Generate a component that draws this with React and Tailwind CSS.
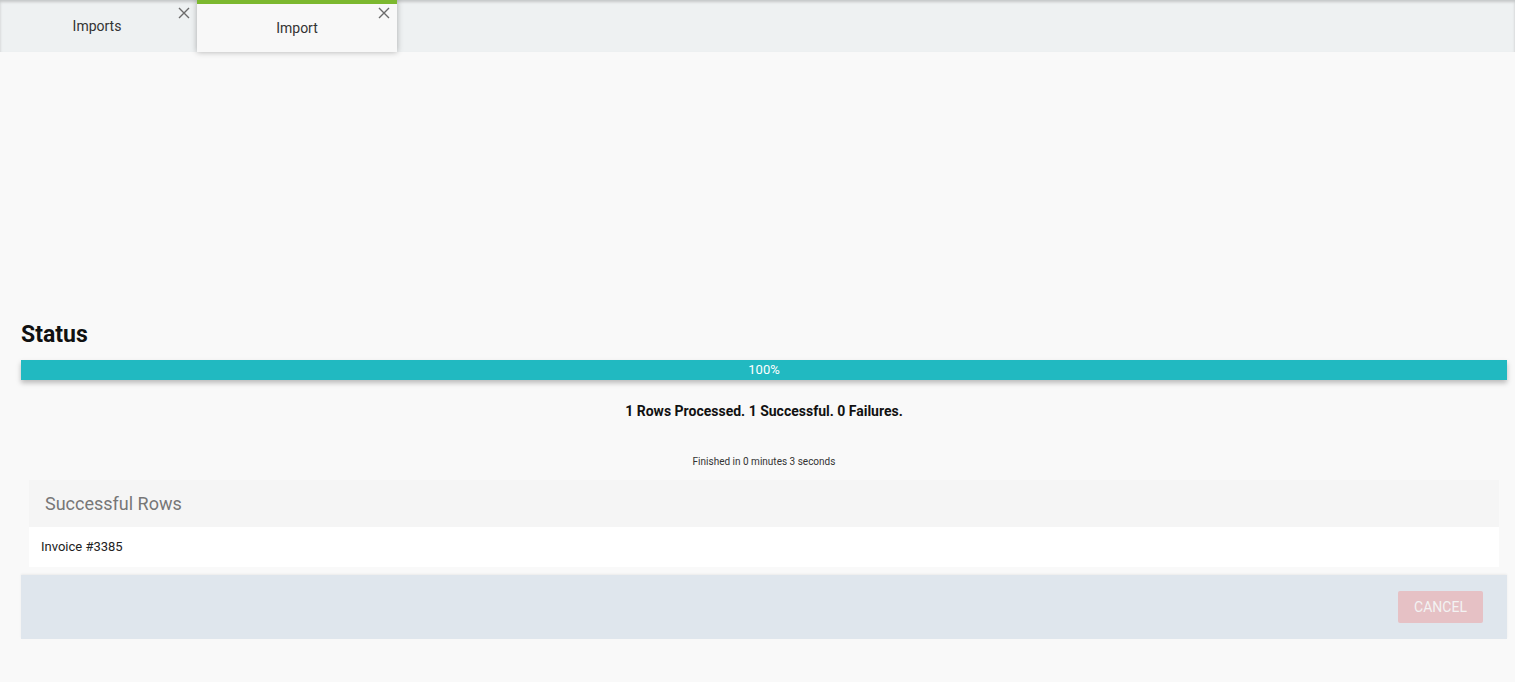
import React from 'react';

const CloseIcon = () => (
        <svg width="12" height="12" viewBox="0 0 12 12" fill="none" stroke="#6b6b6b" strokeWidth="1.4">
                <path d="M1 1L11 11M11 1L1 11" />
        </svg>
);

const Tabs = () => {
        return (
                <div className="relative flex h-[52px] bg-[#eef1f2] shadow-[inset_0_2px_3px_rgba(0,0,0,0.18)]">
                        <div className="relative flex w-[197px] items-center justify-center text-[14px] text-[#333]">
                                <span className="pr-[3px]">Imports</span>
                                <button className="absolute right-[7px] top-[7px]">
                                        <CloseIcon />
                                </button>
                        </div>
                        <div className="relative z-10 flex w-[200px] items-center justify-center border-t-4 border-[#7cb82f] bg-[#f8f8f8] pt-[1px] text-[14px] text-[#333] shadow-[0_0_6px_rgba(0,0,0,0.3)]">
                                <span>Import</span>
                                <button className="absolute right-[7px] top-[3px]">
                                        <CloseIcon />
                                </button>
                        </div>
                </div>
        );
};

const App = () => {
        return (
                <div className="min-h-[682px] bg-[#f9f9f9] font-['Roboto',sans-serif]">
                        <Tabs />
                        <div className="pl-[21px] pr-[8px] pt-[269px]">
                                <h2 className="text-[23px] font-bold leading-[28px] text-[#111]">Status</h2>
                                <div className="mt-[11px] flex h-[20px] items-center justify-center bg-[#21b9c1] text-[13px] text-white shadow-[0_3px_5px_rgba(0,0,0,0.25)]">
                                        100%
                                </div>
                                <p className="mt-[22px] text-center text-[14px] font-bold leading-[18px] text-[#111]">
                                        1 Rows Processed. 1 Successful. 0 Failures.
                                </p>
                                <p className="mt-[36px] text-center text-[10px] leading-[12px] text-[#333]">
                                        Finished in 0 minutes 3 seconds
                                </p>
                                <div className="mx-[8px] mt-[12px] bg-[#f5f5f5]">
                                        <div className="flex h-[47px] items-center px-[16px] text-[18px] text-[#777]">Successful Rows</div>
                                        <div className="flex h-[40px] items-center bg-white px-[12px] text-[13px] text-[#222]">Invoice #3385</div>
                                </div>
                                <div className="mt-[8px] flex h-[64px] items-center justify-end bg-[#dfe6ed] pr-[24px] shadow-[0_-1px_2px_rgba(0,0,0,0.06)]">
                                        <button className="h-[32px] w-[85px] rounded-[2px] bg-[#e6c1c5] text-[14px] text-[#f3f3f3]">CANCEL</button>
                                </div>
                        </div>
                </div>
        );
};

export default App;
